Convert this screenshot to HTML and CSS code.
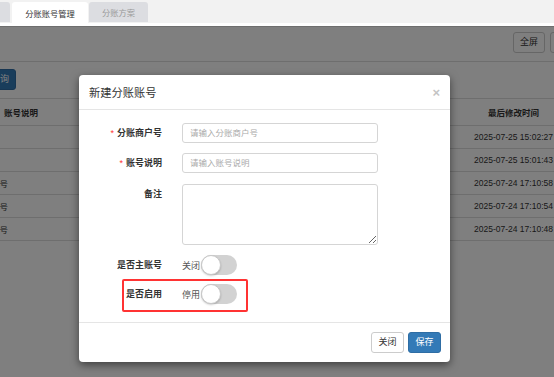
FILE: index.html
```html
<!DOCTYPE html>
<html lang="zh-CN">
<head>
<meta charset="utf-8">
<title>分账账号管理</title>
<link rel="stylesheet" href="styles.css">
</head>
<body>
<div class="tabbar">
  <div class="tab tab-cut"></div>
  <div class="tab tab-active">分账账号管理</div>
  <div class="tab">分账方案</div>
</div>
<div class="content">
  <div class="toolbar">
    <button class="btn">全屏</button>
    <button class="btn">刷新</button>
  </div>
  <div class="searchbar">
    <button class="btn btn-primary btn-search">查询</button>
  </div>
  <div class="grid">
    <div class="grid-row grid-head">
      <div class="cell cell-head-desc">账号说明</div>
      <div class="cell cell-time">最后修改时间</div>
    </div>
    <div class="grid-row">
      <div class="cell cell-clip"></div><div class="cell"></div>
      <div class="cell cell-time">2025-07-25 15:02:27</div>
    </div>
    <div class="grid-row">
      <div class="cell cell-clip"></div><div class="cell"></div>
      <div class="cell cell-time">2025-07-25 15:01:43</div>
    </div>
    <div class="grid-row">
      <div class="cell cell-clip"><span>测试账号</span></div><div class="cell"></div>
      <div class="cell cell-time">2025-07-24 17:10:58</div>
    </div>
    <div class="grid-row">
      <div class="cell cell-clip"><span>测试账号</span></div><div class="cell"></div>
      <div class="cell cell-time">2025-07-24 17:10:54</div>
    </div>
    <div class="grid-row">
      <div class="cell cell-clip"><span>测试账号</span></div><div class="cell"></div>
      <div class="cell cell-time">2025-07-24 17:10:48</div>
    </div>
  </div>

  <div class="overlay">
    <div class="modal">
      <div class="modal-header">
        <span class="modal-title">新建分账账号</span>
        <span class="modal-close">×</span>
      </div>
      <div class="modal-body">
        <div class="form-row">
          <label class="form-label"><span class="req">*</span>分账商户号</label>
          <input class="form-input" type="text" placeholder="请输入分账商户号">
        </div>
        <div class="form-row form-row-b11">
          <label class="form-label"><span class="req">*</span>账号说明</label>
          <input class="form-input" type="text" placeholder="请输入账号说明">
        </div>
        <div class="form-row">
          <label class="form-label form-label-top">备注</label>
          <textarea class="form-textarea"></textarea>
        </div>
        <div class="form-row form-row-b9">
          <label class="form-label">是否主账号</label>
          <div class="switch-wrap"><span class="switch-text">关闭</span><span class="switch"><span class="knob"></span></span></div>
        </div>
        <div class="form-row form-row-last">
          <label class="form-label">是否启用</label>
          <div class="switch-wrap"><span class="switch-text">停用</span><span class="switch"><span class="knob"></span></span></div>
        </div>
        <div class="annot"></div>
      </div>
      <div class="modal-footer">
        <button class="btn">关闭</button>
        <button class="btn btn-primary">保存</button>
      </div>
    </div>
  </div>
</div>
</body>
</html>
```

FILE: styles.css
```css
* { box-sizing: border-box; }
html, body {
  margin: 0;
  padding: 0;
  width: 554px;
  height: 377px;
  overflow: hidden;
  background: #fff;
  font-family: "Liberation Sans", "Noto Sans CJK SC", sans-serif;
  color: #333;
}

/* tab bar */
.tabbar {
  height: 23px;
  background: #f2f2f2;
  display: flex;
  border-bottom: 0;
}
.tab {
  margin-top: 2px;
  height: 20px;
  width: 59px;
  margin-right: 1px;
  background: #dcdde1;
  color: #9a9a9a;
  font-size: 8.25px;
  display: flex;
  align-items: center;
  justify-content: center;
  border-radius: 3px 3px 0 0;
}
.tab-cut {
  width: 10px;
  margin-right: 2px;
  border-radius: 0 3px 0 0;
}
.tab-active {
  width: 76px;
  height: 21px;
  background: #fff;
  color: #333;
  padding-top: 1px;
}

.content {
  position: relative;
  height: 354px;
  border-top: 3px solid #fff;
}

.btn {
  height: 21px;
  padding: 0 6px;
  font-family: inherit;
  font-size: 9px;
  color: #333;
  background: #fff;
  border: 1px solid #ccc;
  border-radius: 3px;
  line-height: 19px;
}
.btn-primary {
  background: #337ab7;
  border-color: #2e6da4;
  color: #fff;
}

.toolbar {
  height: 36px;
  border-top: 1px solid #ddd;
  border-bottom: 1px solid #ddd;
  display: flex;
  justify-content: flex-end;
  align-items: flex-start;
  gap: 5px;
  padding-top: 5px;
  margin-right: -28px;
}
.searchbar {
  height: 36px;
  padding-top: 7px;
  display: flex;
}
.btn-search {
  margin-left: -16px;
  width: 32px;
}

.grid {
  width: 564px;
  border-top: 1px solid #ddd;
  font-size: 8.5px;
}
.grid-row {
  display: grid;
  grid-template-columns: 8px 455px 101px;
  height: 23px;
  border-bottom: 1px solid #ddd;
  align-items: center;
}
.grid-head {
  height: 27px;
  font-weight: bold;
}
.cell { white-space: nowrap; }
.cell-head-desc {
  grid-column: 1 / 3;
  padding-left: 4px;
}
.cell-clip {
  overflow: hidden;
  display: flex;
  justify-content: flex-end;
}
.cell-time {
  grid-column: 3;
  display: flex;
  justify-content: center;
}

/* overlay + modal */
.overlay {
  position: absolute;
  inset: 0;
  background: rgba(0, 0, 0, 0.5);
  padding-top: 49px;
  padding-left: 79px;
}
.modal {
  width: 371px;
  background: #fff;
  border-radius: 4px;
  box-shadow: 0 3px 9px rgba(0, 0, 0, 0.5);
}
.modal-header {
  height: 35px;
  border-bottom: 1px solid #e5e5e5;
  display: flex;
  align-items: center;
  justify-content: space-between;
  padding: 0 10px 0 10px;
}
.modal-title {
  font-size: 11.25px;
  color: #333;
}
.modal-close {
  font-size: 13px;
  font-weight: bold;
  color: #c4c4c4;
  line-height: 1;
  font-family: "Liberation Sans", sans-serif;
}
.modal-body {
  position: relative;
  padding: 13px 0 18px;
}
.form-row {
  display: grid;
  grid-template-columns: 83px 196px;
  column-gap: 20px;
  margin-bottom: 10px;
}
.form-row-b11 { margin-bottom: 11px; }
.form-row-b9 { margin-bottom: 9px; }
.form-row-last { margin-bottom: 0; }
.form-label {
  text-align: right;
  font-size: 9px;
  font-weight: bold;
  color: #333;
  line-height: 20px;
  white-space: nowrap;
}
.form-label-top { line-height: 13px; padding-top: 4px; }
.req {
  color: #f33;
  font-weight: normal;
  margin-right: 3px;
}
.form-input {
  height: 20px;
  width: 196px;
  margin: 0;
  border: 1px solid #d5d5d5;
  border-radius: 3px;
  padding: 0 7px;
  font-family: inherit;
  font-size: 8.5px;
  color: #333;
  outline: none;
}
.form-input::placeholder { color: #aaa; }
.form-textarea {
  width: 196px;
  height: 61px;
  margin: 0;
  border: 1px solid #d5d5d5;
  border-radius: 3px;
  font-family: inherit;
  font-size: 8.5px;
  display: block;
}
.switch-wrap {
  display: flex;
  align-items: center;
  height: 20px;
}
.switch-text {
  font-size: 9px;
  color: #555;
  margin-right: 1px;
}
.switch {
  position: relative;
  width: 36px;
  height: 20px;
  border-radius: 10px;
  background: #d2d2d2;
}
.knob {
  position: absolute;
  left: 0;
  top: 0;
  width: 20px;
  height: 20px;
  border-radius: 50%;
  background: #fff;
  border: 1px solid #c8c8c8;
  box-shadow: 0 1px 2px rgba(0, 0, 0, 0.2);
}
.annot {
  position: absolute;
  left: 43px;
  top: 169px;
  width: 126px;
  height: 33px;
  border: 2px solid #f33;
  border-radius: 2px;
}
.modal-footer {
  border-top: 1px solid #e5e5e5;
  padding: 9px 9px;
  display: flex;
  justify-content: flex-end;
  gap: 4px;
}
.modal-footer .btn { width: 33px; padding: 0; }
```
